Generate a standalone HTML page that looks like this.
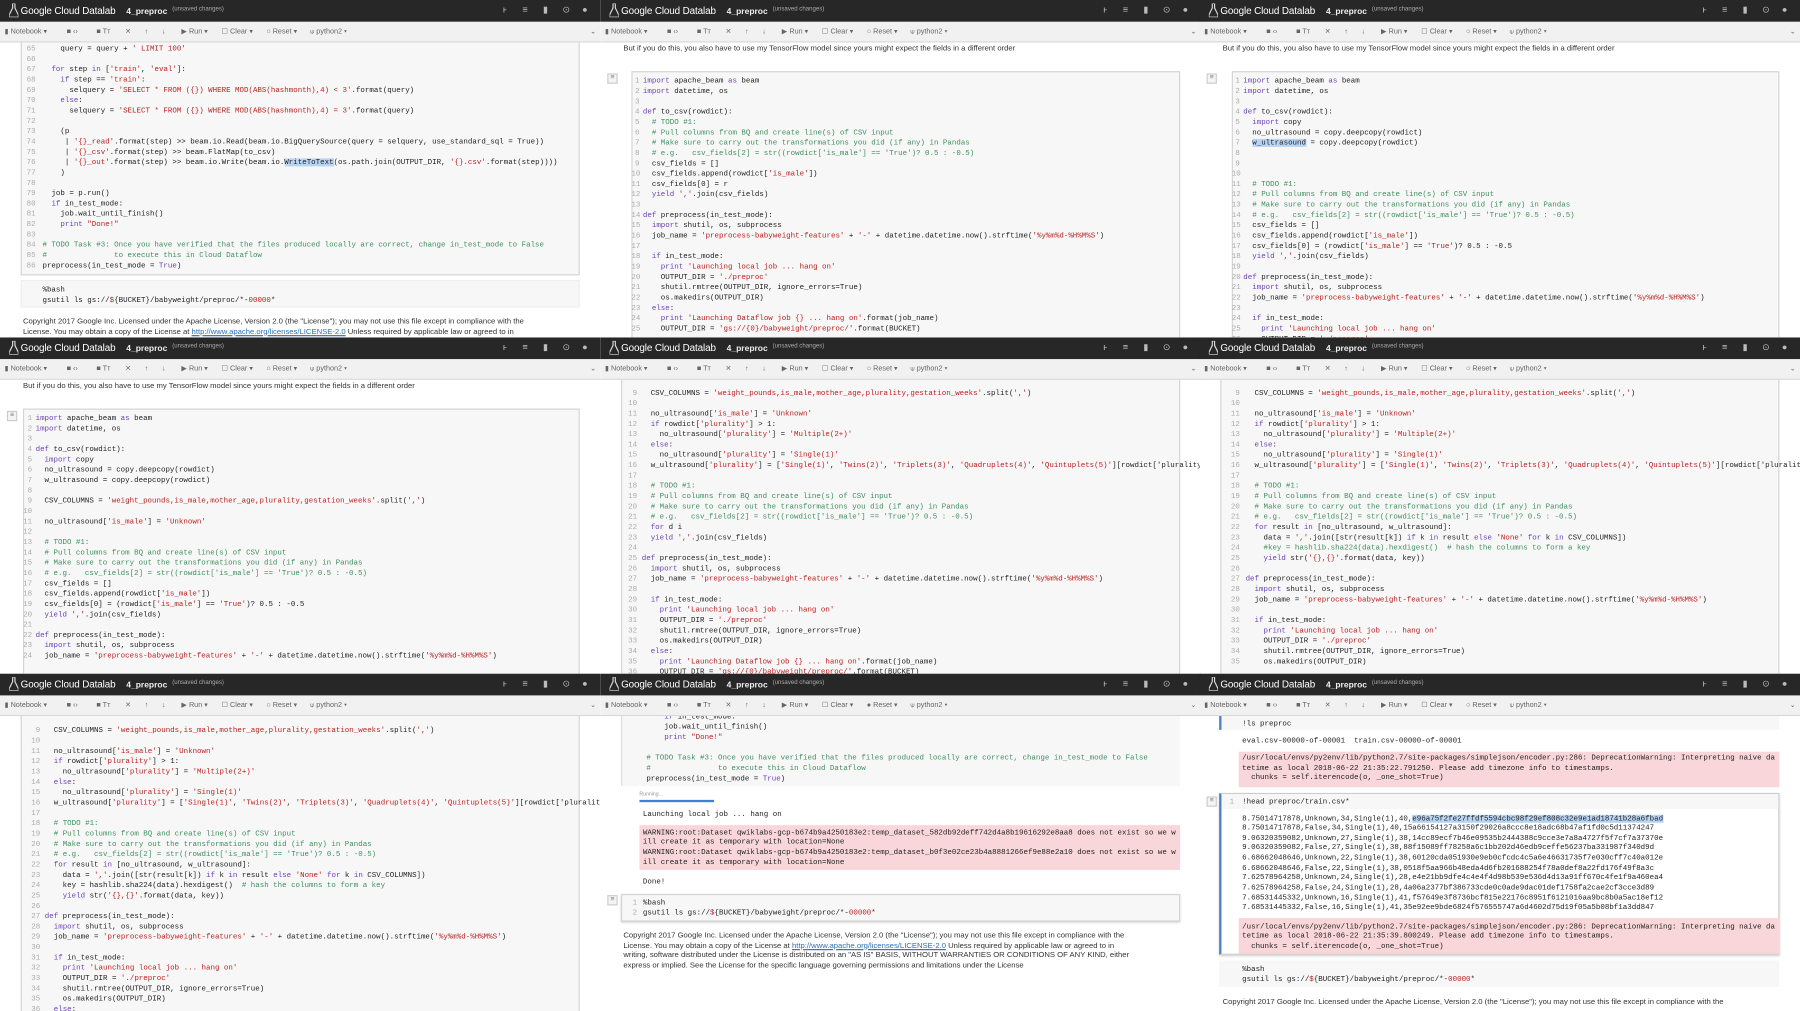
<!DOCTYPE html>
<html><head><meta charset="utf-8">
<style>
*{margin:0;padding:0;box-sizing:border-box}
html,body{width:1800px;height:1011px;overflow:hidden;background:#fff;font-family:"Liberation Sans",sans-serif}
#w{position:absolute;left:0;top:0;width:1568px;height:881px;transform:scale(1.148,1.1476);transform-origin:0 0}
.p{position:absolute;width:523px;height:294px;overflow:hidden;background:#fff;font-family:"Liberation Sans",sans-serif}
.h{position:absolute;left:0;top:0;width:523px;height:19px;background:#272727;color:#fff}
.h .lg{position:absolute;left:8px;top:3px}
.h .tt{position:absolute;left:18px;top:4px;font-size:8.6px;letter-spacing:-0.1px}
.h .nb{position:absolute;left:110px;top:5px;font-size:7.4px;font-weight:bold;color:#eee}
.h .us{position:absolute;left:150px;top:5px;font-size:5.3px;color:#aaa}
.h .ic{position:absolute;top:4px;font-size:8px;color:#bbb}
.t{position:absolute;left:0;top:19px;width:523px;height:18px;background:#f1f1f1;border-bottom:1px solid #d8d8d8;font-size:6.3px;color:#666}
.t span{position:absolute;top:5px;white-space:nowrap}
.cell{position:absolute;background:#f7f7f7;border:1px solid #d4d4d4}
.code{position:absolute;font-family:"Liberation Mono",monospace;font-size:6.5px;line-height:9px;color:#222;white-space:normal}
.code div{height:9px;white-space:pre}
.code b{display:inline-block;text-align:right;color:#aaa;font-weight:normal}
.cm{color:#3f8f5f}
.s{color:#ba2121}
.k{color:#6a3fb5}
.txt{position:absolute;font-size:6.7px;line-height:8.7px;color:#333;white-space:nowrap}
.txt a{color:#2a6fb5;text-decoration:underline}
.mn{position:absolute;width:9px;height:9px;border:1px solid #ccc;background:#f4f4f4;font-size:6px;line-height:7px;text-align:center;color:#777}
.pink{position:absolute;background:#f9d6d9}
.hx{position:absolute;width:523px;height:37px;overflow:hidden}
</style></head><body><div id="w">

<!-- Panel A -->
<div class="p" style="left:0;top:0">
<div class="cell" style="left:18px;top:30px;width:487px;height:210px"></div>
<div class="code" style="left:18px;top:37.5px">
<div><b style="width:13px;margin-right:6px">65</b>    query = query + <span class="s">' LIMIT 100'</span></div>
<div><b style="width:13px;margin-right:6px">66</b></div>
<div><b style="width:13px;margin-right:6px">67</b>  <span class="k">for</span> step <span class="k">in</span> [<span class="s">'train'</span>, <span class="s">'eval'</span>]:</div>
<div><b style="width:13px;margin-right:6px">68</b>    <span class="k">if</span> step == <span class="s">'train'</span>:</div>
<div><b style="width:13px;margin-right:6px">69</b>      selquery = <span class="s">'SELECT * FROM ({}) WHERE MOD(ABS(hashmonth),4) &lt; 3'</span>.format(query)</div>
<div><b style="width:13px;margin-right:6px">70</b>    <span class="k">else</span>:</div>
<div><b style="width:13px;margin-right:6px">71</b>      selquery = <span class="s">'SELECT * FROM ({}) WHERE MOD(ABS(hashmonth),4) = 3'</span>.format(query)</div>
<div><b style="width:13px;margin-right:6px">72</b></div>
<div><b style="width:13px;margin-right:6px">73</b>    (p</div>
<div><b style="width:13px;margin-right:6px">74</b>     | <span class="s">'{}_read'</span>.format(step) &gt;&gt; beam.io.Read(beam.io.BigQuerySource(query = selquery, use_standard_sql = True))</div>
<div><b style="width:13px;margin-right:6px">75</b>     | <span class="s">'{}_csv'</span>.format(step) &gt;&gt; beam.FlatMap(to_csv)</div>
<div><b style="width:13px;margin-right:6px">76</b>     | <span class="s">'{}_out'</span>.format(step) &gt;&gt; beam.io.Write(beam.io.<span style="background:#b9d4f3">WriteToText</span>(os.path.join(OUTPUT_DIR, <span class="s">'{}.csv'</span>.format(step))))</div>
<div><b style="width:13px;margin-right:6px">77</b>    )</div>
<div><b style="width:13px;margin-right:6px">78</b></div>
<div><b style="width:13px;margin-right:6px">79</b>  job = p.run()</div>
<div><b style="width:13px;margin-right:6px">80</b>  <span class="k">if</span> in_test_mode:</div>
<div><b style="width:13px;margin-right:6px">81</b>    job.wait_until_finish()</div>
<div><b style="width:13px;margin-right:6px">82</b>    <span class="k">print</span> <span class="s">"Done!"</span></div>
<div><b style="width:13px;margin-right:6px">83</b></div>
<div><b style="width:13px;margin-right:6px">84</b><span class="cm"># TODO Task #3: Once you have verified that the files produced locally are correct, change in_test_mode to False</span></div>
<div><b style="width:13px;margin-right:6px">85</b><span class="cm">#               to execute this in Cloud Dataflow</span></div>
<div><b style="width:13px;margin-right:6px">86</b>preprocess(in_test_mode = <span class="k">True</span>)</div>
</div>
<div class="cell" style="left:18px;top:244px;width:487px;height:24px;border-color:#eee"></div>
<div class="code" style="left:37px;top:247.5px"><div>%bash</div><div>gsutil ls gs://<span class="s">$</span>{BUCKET}/babyweight/preproc/*-<span class="s">00000</span>*</div></div>
<div class="txt" style="left:20px;top:277px">Copyright 2017 Google Inc. Licensed under the Apache License, Version 2.0 (the "License"); you may not use this file except in compliance with the<br>License. You may obtain a copy of the License at <a>http://www.apache.org/licenses/LICENSE-2.0</a> Unless required by applicable law or agreed to in</div>
</div>

<!-- Panel B -->
<div class="p" style="left:523px;top:0">
<div class="txt" style="left:20px;top:39px">But if you do this, you also have to use my TensorFlow model since yours might expect the fields in a different order</div>
<div class="mn" style="left:6px;top:64px">≡</div>
<div class="cell" style="left:27px;top:62px;width:478px;height:240px"></div>
<div class="code" style="left:27px;top:65.5px">
<div><b style="width:7px;margin-right:3px">1</b><span class="k">import</span> apache_beam <span class="k">as</span> beam</div>
<div><b style="width:7px;margin-right:3px">2</b><span class="k">import</span> datetime, os</div>
<div><b style="width:7px;margin-right:3px">3</b></div>
<div><b style="width:7px;margin-right:3px">4</b><span class="k">def</span> to_csv(rowdict):</div>
<div><b style="width:7px;margin-right:3px">5</b>  <span class="cm"># TODO #1:</span></div>
<div><b style="width:7px;margin-right:3px">6</b>  <span class="cm"># Pull columns from BQ and create line(s) of CSV input</span></div>
<div><b style="width:7px;margin-right:3px">7</b>  <span class="cm"># Make sure to carry out the transformations you did (if any) in Pandas</span></div>
<div><b style="width:7px;margin-right:3px">8</b>  <span class="cm"># e.g.   csv_fields[2] = str((rowdict['is_male'] == 'True')? 0.5 : -0.5)</span></div>
<div><b style="width:7px;margin-right:3px">9</b>  csv_fields = []</div>
<div><b style="width:7px;margin-right:3px">10</b>  csv_fields.append(rowdict[<span class="s">'is_male'</span>])</div>
<div><b style="width:7px;margin-right:3px">11</b>  csv_fields[0] = r</div>
<div><b style="width:7px;margin-right:3px">12</b>  <span class="k">yield</span> <span class="s">','</span>.join(csv_fields)</div>
<div><b style="width:7px;margin-right:3px">13</b></div>
<div><b style="width:7px;margin-right:3px">14</b><span class="k">def</span> preprocess(in_test_mode):</div>
<div><b style="width:7px;margin-right:3px">15</b>  <span class="k">import</span> shutil, os, subprocess</div>
<div><b style="width:7px;margin-right:3px">16</b>  job_name = <span class="s">'preprocess-babyweight-features'</span> + <span class="s">'-'</span> + datetime.datetime.now().strftime(<span class="s">'%y%m%d-%H%M%S'</span>)</div>
<div><b style="width:7px;margin-right:3px">17</b></div>
<div><b style="width:7px;margin-right:3px">18</b>  <span class="k">if</span> in_test_mode:</div>
<div><b style="width:7px;margin-right:3px">19</b>    <span class="k">print</span> <span class="s">'Launching local job ... hang on'</span></div>
<div><b style="width:7px;margin-right:3px">20</b>    OUTPUT_DIR = <span class="s">'./preproc'</span></div>
<div><b style="width:7px;margin-right:3px">21</b>    shutil.rmtree(OUTPUT_DIR, ignore_errors=True)</div>
<div><b style="width:7px;margin-right:3px">22</b>    os.makedirs(OUTPUT_DIR)</div>
<div><b style="width:7px;margin-right:3px">23</b>  <span class="k">else</span>:</div>
<div><b style="width:7px;margin-right:3px">24</b>    <span class="k">print</span> <span class="s">'Launching Dataflow job {} ... hang on'</span>.format(job_name)</div>
<div><b style="width:7px;margin-right:3px">25</b>    OUTPUT_DIR = <span class="s">'gs://{0}/babyweight/preproc/'</span>.format(BUCKET)</div>
</div>
</div>

<!-- Panel C -->
<div class="p" style="left:1045px;top:0">
<div class="txt" style="left:20px;top:39px">But if you do this, you also have to use my TensorFlow model since yours might expect the fields in a different order</div>
<div class="mn" style="left:6px;top:64px">≡</div>
<div class="cell" style="left:28px;top:62px;width:477px;height:240px"></div>
<div class="code" style="left:28px;top:65.5px">
<div><b style="width:7px;margin-right:3px">1</b><span class="k">import</span> apache_beam <span class="k">as</span> beam</div>
<div><b style="width:7px;margin-right:3px">2</b><span class="k">import</span> datetime, os</div>
<div><b style="width:7px;margin-right:3px">3</b></div>
<div><b style="width:7px;margin-right:3px">4</b><span class="k">def</span> to_csv(rowdict):</div>
<div><b style="width:7px;margin-right:3px">5</b>  <span class="k">import</span> copy</div>
<div><b style="width:7px;margin-right:3px">6</b>  no_ultrasound = copy.deepcopy(rowdict)</div>
<div><b style="width:7px;margin-right:3px">7</b>  <span style="background:#b9d4f3">w_ultrasound</span> = copy.deepcopy(rowdict)</div>
<div><b style="width:7px;margin-right:3px">8</b></div>
<div><b style="width:7px;margin-right:3px">9</b></div>
<div><b style="width:7px;margin-right:3px">10</b></div>
<div><b style="width:7px;margin-right:3px">11</b>  <span class="cm"># TODO #1:</span></div>
<div><b style="width:7px;margin-right:3px">12</b>  <span class="cm"># Pull columns from BQ and create line(s) of CSV input</span></div>
<div><b style="width:7px;margin-right:3px">13</b>  <span class="cm"># Make sure to carry out the transformations you did (if any) in Pandas</span></div>
<div><b style="width:7px;margin-right:3px">14</b>  <span class="cm"># e.g.   csv_fields[2] = str((rowdict['is_male'] == 'True')? 0.5 : -0.5)</span></div>
<div><b style="width:7px;margin-right:3px">15</b>  csv_fields = []</div>
<div><b style="width:7px;margin-right:3px">16</b>  csv_fields.append(rowdict[<span class="s">'is_male'</span>])</div>
<div><b style="width:7px;margin-right:3px">17</b>  csv_fields[0] = (rowdict[<span class="s">'is_male'</span>] == <span class="s">'True'</span>)? 0.5 : -0.5</div>
<div><b style="width:7px;margin-right:3px">18</b>  <span class="k">yield</span> <span class="s">','</span>.join(csv_fields)</div>
<div><b style="width:7px;margin-right:3px">19</b></div>
<div><b style="width:7px;margin-right:3px">20</b><span class="k">def</span> preprocess(in_test_mode):</div>
<div><b style="width:7px;margin-right:3px">21</b>  <span class="k">import</span> shutil, os, subprocess</div>
<div><b style="width:7px;margin-right:3px">22</b>  job_name = <span class="s">'preprocess-babyweight-features'</span> + <span class="s">'-'</span> + datetime.datetime.now().strftime(<span class="s">'%y%m%d-%H%M%S'</span>)</div>
<div><b style="width:7px;margin-right:3px">23</b></div>
<div><b style="width:7px;margin-right:3px">24</b>  <span class="k">if</span> in_test_mode:</div>
<div><b style="width:7px;margin-right:3px">25</b>    <span class="k">print</span> <span class="s">'Launching local job ... hang on'</span></div>
<div><b style="width:7px;margin-right:3px">26</b>    OUTPUT_DIR = <span class="s">'./preproc'</span></div>
<div><b style="width:7px;margin-right:3px">27</b>    shutil.rmtree(OUTPUT_DIR, ignore_errors=True)</div>
</div>
</div>

<!-- Panel D -->
<div class="p" style="left:0;top:294px">
<div class="txt" style="left:20px;top:39px">But if you do this, you also have to use my TensorFlow model since yours might expect the fields in a different order</div>
<div class="mn" style="left:6px;top:64px">≡</div>
<div class="cell" style="left:20px;top:62px;width:485px;height:240px"></div>
<div class="code" style="left:20px;top:65.5px">
<div><b style="width:8px;margin-right:3px">1</b><span class="k">import</span> apache_beam <span class="k">as</span> beam</div>
<div><b style="width:8px;margin-right:3px">2</b><span class="k">import</span> datetime, os</div>
<div><b style="width:8px;margin-right:3px">3</b></div>
<div><b style="width:8px;margin-right:3px">4</b><span class="k">def</span> to_csv(rowdict):</div>
<div><b style="width:8px;margin-right:3px">5</b>  <span class="k">import</span> copy</div>
<div><b style="width:8px;margin-right:3px">6</b>  no_ultrasound = copy.deepcopy(rowdict)</div>
<div><b style="width:8px;margin-right:3px">7</b>  w_ultrasound = copy.deepcopy(rowdict)</div>
<div><b style="width:8px;margin-right:3px">8</b></div>
<div><b style="width:8px;margin-right:3px">9</b>  CSV_COLUMNS = <span class="s">'weight_pounds,is_male,mother_age,plurality,gestation_weeks'</span>.split(<span class="s">','</span>)</div>
<div><b style="width:8px;margin-right:3px">10</b></div>
<div><b style="width:8px;margin-right:3px">11</b>  no_ultrasound[<span class="s">'is_male'</span>] = <span class="s">'Unknown'</span></div>
<div><b style="width:8px;margin-right:3px">12</b></div>
<div><b style="width:8px;margin-right:3px">13</b>  <span class="cm"># TODO #1:</span></div>
<div><b style="width:8px;margin-right:3px">14</b>  <span class="cm"># Pull columns from BQ and create line(s) of CSV input</span></div>
<div><b style="width:8px;margin-right:3px">15</b>  <span class="cm"># Make sure to carry out the transformations you did (if any) in Pandas</span></div>
<div><b style="width:8px;margin-right:3px">16</b>  <span class="cm"># e.g.   csv_fields[2] = str((rowdict['is_male'] == 'True')? 0.5 : -0.5)</span></div>
<div><b style="width:8px;margin-right:3px">17</b>  csv_fields = []</div>
<div><b style="width:8px;margin-right:3px">18</b>  csv_fields.append(rowdict[<span class="s">'is_male'</span>])</div>
<div><b style="width:8px;margin-right:3px">19</b>  csv_fields[0] = (rowdict[<span class="s">'is_male'</span>] == <span class="s">'True'</span>)? 0.5 : -0.5</div>
<div><b style="width:8px;margin-right:3px">20</b>  <span class="k">yield</span> <span class="s">','</span>.join(csv_fields)</div>
<div><b style="width:8px;margin-right:3px">21</b></div>
<div><b style="width:8px;margin-right:3px">22</b><span class="k">def</span> preprocess(in_test_mode):</div>
<div><b style="width:8px;margin-right:3px">23</b>  <span class="k">import</span> shutil, os, subprocess</div>
<div><b style="width:8px;margin-right:3px">24</b>  job_name = <span class="s">'preprocess-babyweight-features'</span> + <span class="s">'-'</span> + datetime.datetime.now().strftime(<span class="s">'%y%m%d-%H%M%S'</span>)</div>
</div>
</div>

<!-- Panel E -->
<div class="p" style="left:523px;top:294px">
<div class="cell" style="left:18px;top:30px;width:487px;height:272px"></div>
<div class="code" style="left:18px;top:43.5px">
<div><b style="width:14px;margin-right:4px">9</b>  CSV_COLUMNS = <span class="s">'weight_pounds,is_male,mother_age,plurality,gestation_weeks'</span>.split(<span class="s">','</span>)</div>
<div><b style="width:14px;margin-right:4px">10</b></div>
<div><b style="width:14px;margin-right:4px">11</b>  no_ultrasound[<span class="s">'is_male'</span>] = <span class="s">'Unknown'</span></div>
<div><b style="width:14px;margin-right:4px">12</b>  <span class="k">if</span> rowdict[<span class="s">'plurality'</span>] &gt; 1:</div>
<div><b style="width:14px;margin-right:4px">13</b>    no_ultrasound[<span class="s">'plurality'</span>] = <span class="s">'Multiple(2+)'</span></div>
<div><b style="width:14px;margin-right:4px">14</b>  <span class="k">else</span>:</div>
<div><b style="width:14px;margin-right:4px">15</b>    no_ultrasound[<span class="s">'plurality'</span>] = <span class="s">'Single(1)'</span></div>
<div><b style="width:14px;margin-right:4px">16</b>  w_ultrasound[<span class="s">'plurality'</span>] = [<span class="s">'Single(1)'</span>, <span class="s">'Twins(2)'</span>, <span class="s">'Triplets(3)'</span>, <span class="s">'Quadruplets(4)'</span>, <span class="s">'Quintuplets(5)'</span>][rowdict['plurality'] - 1]</div>
<div><b style="width:14px;margin-right:4px">17</b></div>
<div><b style="width:14px;margin-right:4px">18</b>  <span class="cm"># TODO #1:</span></div>
<div><b style="width:14px;margin-right:4px">19</b>  <span class="cm"># Pull columns from BQ and create line(s) of CSV input</span></div>
<div><b style="width:14px;margin-right:4px">20</b>  <span class="cm"># Make sure to carry out the transformations you did (if any) in Pandas</span></div>
<div><b style="width:14px;margin-right:4px">21</b>  <span class="cm"># e.g.   csv_fields[2] = str((rowdict['is_male'] == 'True')? 0.5 : -0.5)</span></div>
<div><b style="width:14px;margin-right:4px">22</b>  <span class="k">for</span> d i</div>
<div><b style="width:14px;margin-right:4px">23</b>  <span class="k">yield</span> <span class="s">','</span>.join(csv_fields)</div>
<div><b style="width:14px;margin-right:4px">24</b></div>
<div><b style="width:14px;margin-right:4px">25</b><span class="k">def</span> preprocess(in_test_mode):</div>
<div><b style="width:14px;margin-right:4px">26</b>  <span class="k">import</span> shutil, os, subprocess</div>
<div><b style="width:14px;margin-right:4px">27</b>  job_name = <span class="s">'preprocess-babyweight-features'</span> + <span class="s">'-'</span> + datetime.datetime.now().strftime(<span class="s">'%y%m%d-%H%M%S'</span>)</div>
<div><b style="width:14px;margin-right:4px">28</b></div>
<div><b style="width:14px;margin-right:4px">29</b>  <span class="k">if</span> in_test_mode:</div>
<div><b style="width:14px;margin-right:4px">30</b>    <span class="k">print</span> <span class="s">'Launching local job ... hang on'</span></div>
<div><b style="width:14px;margin-right:4px">31</b>    OUTPUT_DIR = <span class="s">'./preproc'</span></div>
<div><b style="width:14px;margin-right:4px">32</b>    shutil.rmtree(OUTPUT_DIR, ignore_errors=True)</div>
<div><b style="width:14px;margin-right:4px">33</b>    os.makedirs(OUTPUT_DIR)</div>
<div><b style="width:14px;margin-right:4px">34</b>  <span class="k">else</span>:</div>
<div><b style="width:14px;margin-right:4px">35</b>    <span class="k">print</span> <span class="s">'Launching Dataflow job {} ... hang on'</span>.format(job_name)</div>
<div><b style="width:14px;margin-right:4px">36</b>    OUTPUT_DIR = <span class="s">'gs://{0}/babyweight/preproc/'</span>.format(BUCKET)</div>
</div>
</div>

<!-- Panel F -->
<div class="p" style="left:1045px;top:294px">
<div class="cell" style="left:18px;top:30px;width:487px;height:272px"></div>
<div class="code" style="left:18px;top:43.5px">
<div><b style="width:17px;margin-right:5px">9</b>  CSV_COLUMNS = <span class="s">'weight_pounds,is_male,mother_age,plurality,gestation_weeks'</span>.split(<span class="s">','</span>)</div>
<div><b style="width:17px;margin-right:5px">10</b></div>
<div><b style="width:17px;margin-right:5px">11</b>  no_ultrasound[<span class="s">'is_male'</span>] = <span class="s">'Unknown'</span></div>
<div><b style="width:17px;margin-right:5px">12</b>  <span class="k">if</span> rowdict[<span class="s">'plurality'</span>] &gt; 1:</div>
<div><b style="width:17px;margin-right:5px">13</b>    no_ultrasound[<span class="s">'plurality'</span>] = <span class="s">'Multiple(2+)'</span></div>
<div><b style="width:17px;margin-right:5px">14</b>  <span class="k">else</span>:</div>
<div><b style="width:17px;margin-right:5px">15</b>    no_ultrasound[<span class="s">'plurality'</span>] = <span class="s">'Single(1)'</span></div>
<div><b style="width:17px;margin-right:5px">16</b>  w_ultrasound[<span class="s">'plurality'</span>] = [<span class="s">'Single(1)'</span>, <span class="s">'Twins(2)'</span>, <span class="s">'Triplets(3)'</span>, <span class="s">'Quadruplets(4)'</span>, <span class="s">'Quintuplets(5)'</span>][rowdict['plurality'] - 1]</div>
<div><b style="width:17px;margin-right:5px">17</b></div>
<div><b style="width:17px;margin-right:5px">18</b>  <span class="cm"># TODO #1:</span></div>
<div><b style="width:17px;margin-right:5px">19</b>  <span class="cm"># Pull columns from BQ and create line(s) of CSV input</span></div>
<div><b style="width:17px;margin-right:5px">20</b>  <span class="cm"># Make sure to carry out the transformations you did (if any) in Pandas</span></div>
<div><b style="width:17px;margin-right:5px">21</b>  <span class="cm"># e.g.   csv_fields[2] = str((rowdict['is_male'] == 'True')? 0.5 : -0.5)</span></div>
<div><b style="width:17px;margin-right:5px">22</b>  <span class="k">for</span> result <span class="k">in</span> [no_ultrasound, w_ultrasound]:</div>
<div><b style="width:17px;margin-right:5px">23</b>    data = <span class="s">','</span>.join([str(result[k]) <span class="k">if</span> k <span class="k">in</span> result <span class="k">else</span> <span class="s">'None'</span> <span class="k">for</span> k <span class="k">in</span> CSV_COLUMNS])</div>
<div><b style="width:17px;margin-right:5px">24</b>    <span class="cm">#key = hashlib.sha224(data).hexdigest()  # hash the columns to form a key</span></div>
<div><b style="width:17px;margin-right:5px">25</b>    <span class="k">yield</span> str(<span class="s">'{},{}'</span>.format(data, key))</div>
<div><b style="width:17px;margin-right:5px">26</b></div>
<div><b style="width:17px;margin-right:5px">27</b><span class="k">def</span> preprocess(in_test_mode):</div>
<div><b style="width:17px;margin-right:5px">28</b>  <span class="k">import</span> shutil, os, subprocess</div>
<div><b style="width:17px;margin-right:5px">29</b>  job_name = <span class="s">'preprocess-babyweight-features'</span> + <span class="s">'-'</span> + datetime.datetime.now().strftime(<span class="s">'%y%m%d-%H%M%S'</span>)</div>
<div><b style="width:17px;margin-right:5px">30</b></div>
<div><b style="width:17px;margin-right:5px">31</b>  <span class="k">if</span> in_test_mode:</div>
<div><b style="width:17px;margin-right:5px">32</b>    <span class="k">print</span> <span class="s">'Launching local job ... hang on'</span></div>
<div><b style="width:17px;margin-right:5px">33</b>    OUTPUT_DIR = <span class="s">'./preproc'</span></div>
<div><b style="width:17px;margin-right:5px">34</b>    shutil.rmtree(OUTPUT_DIR, ignore_errors=True)</div>
<div><b style="width:17px;margin-right:5px">35</b>    os.makedirs(OUTPUT_DIR)</div>
</div>
</div>

<!-- Panel G -->
<div class="p" style="left:0;top:587px">
<div class="cell" style="left:18px;top:30px;width:487px;height:272px"></div>
<div class="code" style="left:18px;top:44.5px">
<div><b style="width:17px;margin-right:4px">9</b>  CSV_COLUMNS = <span class="s">'weight_pounds,is_male,mother_age,plurality,gestation_weeks'</span>.split(<span class="s">','</span>)</div>
<div><b style="width:17px;margin-right:4px">10</b></div>
<div><b style="width:17px;margin-right:4px">11</b>  no_ultrasound[<span class="s">'is_male'</span>] = <span class="s">'Unknown'</span></div>
<div><b style="width:17px;margin-right:4px">12</b>  <span class="k">if</span> rowdict[<span class="s">'plurality'</span>] &gt; 1:</div>
<div><b style="width:17px;margin-right:4px">13</b>    no_ultrasound[<span class="s">'plurality'</span>] = <span class="s">'Multiple(2+)'</span></div>
<div><b style="width:17px;margin-right:4px">14</b>  <span class="k">else</span>:</div>
<div><b style="width:17px;margin-right:4px">15</b>    no_ultrasound[<span class="s">'plurality'</span>] = <span class="s">'Single(1)'</span></div>
<div><b style="width:17px;margin-right:4px">16</b>  w_ultrasound[<span class="s">'plurality'</span>] = [<span class="s">'Single(1)'</span>, <span class="s">'Twins(2)'</span>, <span class="s">'Triplets(3)'</span>, <span class="s">'Quadruplets(4)'</span>, <span class="s">'Quintuplets(5)'</span>][rowdict['plurality'] - 1]</div>
<div><b style="width:17px;margin-right:4px">17</b></div>
<div><b style="width:17px;margin-right:4px">18</b>  <span class="cm"># TODO #1:</span></div>
<div><b style="width:17px;margin-right:4px">19</b>  <span class="cm"># Pull columns from BQ and create line(s) of CSV input</span></div>
<div><b style="width:17px;margin-right:4px">20</b>  <span class="cm"># Make sure to carry out the transformations you did (if any) in Pandas</span></div>
<div><b style="width:17px;margin-right:4px">21</b>  <span class="cm"># e.g.   csv_fields[2] = str((rowdict['is_male'] == 'True')? 0.5 : -0.5)</span></div>
<div><b style="width:17px;margin-right:4px">22</b>  <span class="k">for</span> result <span class="k">in</span> [no_ultrasound, w_ultrasound]:</div>
<div><b style="width:17px;margin-right:4px">23</b>    data = <span class="s">','</span>.join([str(result[k]) <span class="k">if</span> k <span class="k">in</span> result <span class="k">else</span> <span class="s">'None'</span> <span class="k">for</span> k <span class="k">in</span> CSV_COLUMNS])</div>
<div><b style="width:17px;margin-right:4px">24</b>    key = hashlib.sha224(data).hexdigest()  <span class="cm"># hash the columns to form a key</span></div>
<div><b style="width:17px;margin-right:4px">25</b>    <span class="k">yield</span> str(<span class="s">'{},{}'</span>.format(data, key))</div>
<div><b style="width:17px;margin-right:4px">26</b></div>
<div><b style="width:17px;margin-right:4px">27</b><span class="k">def</span> preprocess(in_test_mode):</div>
<div><b style="width:17px;margin-right:4px">28</b>  <span class="k">import</span> shutil, os, subprocess</div>
<div><b style="width:17px;margin-right:4px">29</b>  job_name = <span class="s">'preprocess-babyweight-features'</span> + <span class="s">'-'</span> + datetime.datetime.now().strftime(<span class="s">'%y%m%d-%H%M%S'</span>)</div>
<div><b style="width:17px;margin-right:4px">30</b></div>
<div><b style="width:17px;margin-right:4px">31</b>  <span class="k">if</span> in_test_mode:</div>
<div><b style="width:17px;margin-right:4px">32</b>    <span class="k">print</span> <span class="s">'Launching local job ... hang on'</span></div>
<div><b style="width:17px;margin-right:4px">33</b>    OUTPUT_DIR = <span class="s">'./preproc'</span></div>
<div><b style="width:17px;margin-right:4px">34</b>    shutil.rmtree(OUTPUT_DIR, ignore_errors=True)</div>
<div><b style="width:17px;margin-right:4px">35</b>    os.makedirs(OUTPUT_DIR)</div>
<div><b style="width:17px;margin-right:4px">36</b>  <span class="k">else</span>:</div>
</div>
</div>

<!-- Panel H -->
<div class="p" style="left:523px;top:587px">
<div class="cell" style="left:18px;top:30px;width:487px;height:68px;border:none;border-left:1px solid #ddd"></div>
<div class="code" style="left:40px;top:33px">
<div>    <span class="k">if</span> in_test_mode:</div>
<div>    job.wait_until_finish()</div>
<div>    <span class="k">print</span> <span class="s">"Done!"</span></div>
<div></div>
<div><span class="cm"># TODO Task #3: Once you have verified that the files produced locally are correct, change in_test_mode to False</span></div>
<div><span class="cm">#               to execute this in Cloud Dataflow</span></div>
<div>preprocess(in_test_mode = <span class="k">True</span>)</div>
</div>
<div style="position:absolute;left:34px;top:102px;font-size:4.5px;color:#999">Running...</div>
<div style="position:absolute;left:34px;top:109.5px;width:65px;height:2px;background:#3f7fd6"></div>
<div class="code" style="left:37px;top:118px"><div>Launching local job ... hang on</div></div>
<div class="pink" style="left:34px;top:132px;width:471px;height:39px"></div>
<div class="code" style="left:37px;top:134.5px;line-height:8.7px">
<div style="height:8.7px">WARNING:root:Dataset qwiklabs-gcp-b674b9a4250183e2:temp_dataset_582db92deff742d4a8b19616292e8aa8 does not exist so we w</div>
<div style="height:8.7px">ill create it as temporary with location=None</div>
<div style="height:8.7px">WARNING:root:Dataset qwiklabs-gcp-b674b9a4250183e2:temp_dataset_b0f3e02ce23b4a8881266ef9e88e2a10 does not exist so we w</div>
<div style="height:8.7px">ill create it as temporary with location=None</div>
</div>
<div class="code" style="left:37px;top:176.5px"><div>Done!</div></div>
<div class="mn" style="left:6px;top:193px">≡</div>
<div class="cell" style="left:18px;top:192px;width:487px;height:24px;box-shadow:0 1px 2px #ccc"></div>
<div class="code" style="left:18px;top:195px">
<div><b style="width:14px;margin-right:5px">1</b>%bash</div>
<div><b style="width:14px;margin-right:5px">2</b>gsutil ls gs://<span class="s">$</span>{BUCKET}/babyweight/preproc/*-<span class="s">00000</span>*</div>
</div>
<div class="txt" style="left:20px;top:225px">Copyright 2017 Google Inc. Licensed under the Apache License, Version 2.0 (the "License"); you may not use this file except in compliance with the<br>License. You may obtain a copy of the License at <a>http://www.apache.org/licenses/LICENSE-2.0</a> Unless required by applicable law or agreed to in<br>writing, software distributed under the License is distributed on an "AS IS" BASIS, WITHOUT WARRANTIES OR CONDITIONS OF ANY KIND, either<br>express or implied. See the License for the specific language governing permissions and limitations under the License</div>
</div>

<!-- Panel I -->
<div class="p" style="left:1045px;top:587px">
<div class="cell" style="left:17px;top:30px;width:488px;height:19px;border:none;border-left:2px solid #4a7fc1;background:#f7f7f7"></div>
<div class="code" style="left:37px;top:38.5px"><div>!ls preproc</div></div>
<div class="code" style="left:37px;top:53.5px"><div>eval.csv-00000-of-00001  train.csv-00000-of-00001</div></div>
<div class="pink" style="left:34px;top:68px;width:471px;height:31px"></div>
<div class="code" style="left:37px;top:70px;line-height:8.7px">
<div style="height:8.7px">/usr/local/envs/py2env/lib/python2.7/site-packages/simplejson/encoder.py:286: DeprecationWarning: Interpreting naive da</div>
<div style="height:8.7px">tetime as local 2018-06-22 21:35:22.791250. Please add timezone info to timestamps.</div>
<div style="height:8.7px">  chunks = self.iterencode(o, _one_shot=True)</div>
</div>
<div class="mn" style="left:6px;top:107px">≡</div>
<div class="cell" style="left:17px;top:104px;width:488px;height:141px;background:#fff;border:1px solid #ccc;border-left:2px solid #4a7fc1;box-shadow:0 1px 2px #ccc"></div>
<div style="position:absolute;left:19px;top:105px;width:485px;height:13px;background:#f7f7f7"></div>
<div class="code" style="left:19px;top:106.5px"><div><b style="width:11px;margin-right:7px">1</b>!head preproc/train.csv*</div></div>
<div class="code" style="left:37px;top:122.5px;line-height:8.67px">
<div style="height:8.67px">8.75014717878,Unknown,34,Single(1),40,<span style="background:#b9d4f3">e96a75f2fe27ffdf5594cbc98f29ef808c32e9e1ad18741b28a6fbad</span></div>
<div style="height:8.67px">8.75014717878,False,34,Single(1),40,15a66154127a3150f29026a8ccc8e18adc68b47af1fd0c5d11374247</div>
<div style="height:8.67px">9.06320359082,Unknown,27,Single(1),38,14cc89ecf7b46e09535b2444388c9cce3e7a8a4727f5f7cf7a37370e</div>
<div style="height:8.67px">9.06320359082,False,27,Single(1),38,88f15089ff78258a6c1bb202d46edb9ceffe56237ba331987f340d9d</div>
<div style="height:8.67px">6.68662048646,Unknown,22,Single(1),38,60120cda051930e9eb0cfcdc4c5a6e46631735f7e030cff7c40a012e</div>
<div style="height:8.67px">6.68662048646,False,22,Single(1),38,0518f5aa966b48eda4d6fb201688254f78a0def8a22fd176f49f8a3c</div>
<div style="height:8.67px">7.62578964258,Unknown,24,Single(1),28,e4e21bb9dfe4c4e4f4d98b539e536d4d13a91ff670c4fe1f9a460ea4</div>
<div style="height:8.67px">7.62578964258,False,24,Single(1),28,4a06a2377bf386733cde0c0ade9dac01def1758fa2cae2cf3cce3d89</div>
<div style="height:8.67px">7.68531445332,Unknown,16,Single(1),41,f57649e3f8736bcf815e22176c8951f6121016aa9bc8b0a5ac18ef12</div>
<div style="height:8.67px">7.68531445332,False,16,Single(1),41,35e92ee9bde6824f576555747a6d4602d75d19f05a5b08bf1a3dd847</div>
</div>
<div class="pink" style="left:34px;top:213px;width:471px;height:31px"></div>
<div class="code" style="left:37px;top:216.5px;line-height:8.7px">
<div style="height:8.7px">/usr/local/envs/py2env/lib/python2.7/site-packages/simplejson/encoder.py:286: DeprecationWarning: Interpreting naive da</div>
<div style="height:8.7px">tetime as local 2018-06-22 21:35:39.800249. Please add timezone info to timestamps.</div>
<div style="height:8.7px">  chunks = self.iterencode(o, _one_shot=True)</div>
</div>
<div class="cell" style="left:17px;top:250px;width:488px;height:23px;border:none;background:#f7f7f7"></div>
<div class="code" style="left:37px;top:252.5px"><div>%bash</div><div>gsutil ls gs://<span class="s">$</span>{BUCKET}/babyweight/preproc/*-<span class="s">00000</span>*</div></div>
<div class="txt" style="left:20px;top:283px">Copyright 2017 Google Inc. Licensed under the Apache License, Version 2.0 (the "License"); you may not use this file except in compliance with the</div>
</div>

<!-- headers & toolbars -->
<div class="hx" style="left:0;top:0"><div class="h"><svg class="lg" width="8" height="12" viewBox="0 0 8 12"><path d="M3 0h2v4l3 6v2H0v-2l3-6z" fill="none" stroke="#ddd" stroke-width="1"/></svg><span class="tt">Google Cloud Datalab</span><span class="nb">4_preproc</span><span class="us">(unsaved changes)</span><span class="ic" style="left:438px">ⱶ</span><span class="ic" style="left:455px">≡</span><span class="ic" style="left:473px">▮</span><span class="ic" style="left:490px">⊙</span><span class="ic" style="left:507px">●</span></div><div class="t"><span style="left:4px">▮ Notebook ▾</span><span style="left:58px">■ ‹›</span><span style="left:84px">■ Tт</span><span style="left:109px">✕</span><span style="left:126px">↑</span><span style="left:141px">↓</span><span style="left:158px">▶ Run ▾</span><span style="left:193px">☐ Clear ▾</span><span style="left:232px">○ Reset ▾</span><span style="left:270px">⍦ python2 ▾</span><span style="left:514px">⌄</span></div></div>
<div class="hx" style="left:523px;top:0"><div class="h"><svg class="lg" width="8" height="12" viewBox="0 0 8 12"><path d="M3 0h2v4l3 6v2H0v-2l3-6z" fill="none" stroke="#ddd" stroke-width="1"/></svg><span class="tt">Google Cloud Datalab</span><span class="nb">4_preproc</span><span class="us">(unsaved changes)</span><span class="ic" style="left:438px">ⱶ</span><span class="ic" style="left:455px">≡</span><span class="ic" style="left:473px">▮</span><span class="ic" style="left:490px">⊙</span><span class="ic" style="left:507px">●</span></div><div class="t"><span style="left:4px">▮ Notebook ▾</span><span style="left:58px">■ ‹›</span><span style="left:84px">■ Tт</span><span style="left:109px">✕</span><span style="left:126px">↑</span><span style="left:141px">↓</span><span style="left:158px">▶ Run ▾</span><span style="left:193px">☐ Clear ▾</span><span style="left:232px">○ Reset ▾</span><span style="left:270px">⍦ python2 ▾</span><span style="left:514px">⌄</span></div></div>
<div class="hx" style="left:1045px;top:0"><div class="h"><svg class="lg" width="8" height="12" viewBox="0 0 8 12"><path d="M3 0h2v4l3 6v2H0v-2l3-6z" fill="none" stroke="#ddd" stroke-width="1"/></svg><span class="tt">Google Cloud Datalab</span><span class="nb">4_preproc</span><span class="us">(unsaved changes)</span><span class="ic" style="left:438px">ⱶ</span><span class="ic" style="left:455px">≡</span><span class="ic" style="left:473px">▮</span><span class="ic" style="left:490px">⊙</span><span class="ic" style="left:507px">●</span></div><div class="t"><span style="left:4px">▮ Notebook ▾</span><span style="left:58px">■ ‹›</span><span style="left:84px">■ Tт</span><span style="left:109px">✕</span><span style="left:126px">↑</span><span style="left:141px">↓</span><span style="left:158px">▶ Run ▾</span><span style="left:193px">☐ Clear ▾</span><span style="left:232px">○ Reset ▾</span><span style="left:270px">⍦ python2 ▾</span><span style="left:514px">⌄</span></div></div>
<div class="hx" style="left:0;top:294px"><div class="h"><svg class="lg" width="8" height="12" viewBox="0 0 8 12"><path d="M3 0h2v4l3 6v2H0v-2l3-6z" fill="none" stroke="#ddd" stroke-width="1"/></svg><span class="tt">Google Cloud Datalab</span><span class="nb">4_preproc</span><span class="us">(unsaved changes)</span><span class="ic" style="left:438px">ⱶ</span><span class="ic" style="left:455px">≡</span><span class="ic" style="left:473px">▮</span><span class="ic" style="left:490px">⊙</span><span class="ic" style="left:507px">●</span></div><div class="t"><span style="left:4px">▮ Notebook ▾</span><span style="left:58px">■ ‹›</span><span style="left:84px">■ Tт</span><span style="left:109px">✕</span><span style="left:126px">↑</span><span style="left:141px">↓</span><span style="left:158px">▶ Run ▾</span><span style="left:193px">☐ Clear ▾</span><span style="left:232px">○ Reset ▾</span><span style="left:270px">⍦ python2 ▾</span><span style="left:514px">⌄</span></div></div>
<div class="hx" style="left:523px;top:294px"><div class="h"><svg class="lg" width="8" height="12" viewBox="0 0 8 12"><path d="M3 0h2v4l3 6v2H0v-2l3-6z" fill="none" stroke="#ddd" stroke-width="1"/></svg><span class="tt">Google Cloud Datalab</span><span class="nb">4_preproc</span><span class="us">(unsaved changes)</span><span class="ic" style="left:438px">ⱶ</span><span class="ic" style="left:455px">≡</span><span class="ic" style="left:473px">▮</span><span class="ic" style="left:490px">⊙</span><span class="ic" style="left:507px">●</span></div><div class="t"><span style="left:4px">▮ Notebook ▾</span><span style="left:58px">■ ‹›</span><span style="left:84px">■ Tт</span><span style="left:109px">✕</span><span style="left:126px">↑</span><span style="left:141px">↓</span><span style="left:158px">▶ Run ▾</span><span style="left:193px">☐ Clear ▾</span><span style="left:232px">○ Reset ▾</span><span style="left:270px">⍦ python2 ▾</span><span style="left:514px">⌄</span></div></div>
<div class="hx" style="left:1045px;top:294px"><div class="h"><svg class="lg" width="8" height="12" viewBox="0 0 8 12"><path d="M3 0h2v4l3 6v2H0v-2l3-6z" fill="none" stroke="#ddd" stroke-width="1"/></svg><span class="tt">Google Cloud Datalab</span><span class="nb">4_preproc</span><span class="us">(unsaved changes)</span><span class="ic" style="left:438px">ⱶ</span><span class="ic" style="left:455px">≡</span><span class="ic" style="left:473px">▮</span><span class="ic" style="left:490px">⊙</span><span class="ic" style="left:507px">●</span></div><div class="t"><span style="left:4px">▮ Notebook ▾</span><span style="left:58px">■ ‹›</span><span style="left:84px">■ Tт</span><span style="left:109px">✕</span><span style="left:126px">↑</span><span style="left:141px">↓</span><span style="left:158px">▶ Run ▾</span><span style="left:193px">☐ Clear ▾</span><span style="left:232px">○ Reset ▾</span><span style="left:270px">⍦ python2 ▾</span><span style="left:514px">⌄</span></div></div>
<div class="hx" style="left:0;top:587px"><div class="h"><svg class="lg" width="8" height="12" viewBox="0 0 8 12"><path d="M3 0h2v4l3 6v2H0v-2l3-6z" fill="none" stroke="#ddd" stroke-width="1"/></svg><span class="tt">Google Cloud Datalab</span><span class="nb">4_preproc</span><span class="us">(unsaved changes)</span><span class="ic" style="left:438px">ⱶ</span><span class="ic" style="left:455px">≡</span><span class="ic" style="left:473px">▮</span><span class="ic" style="left:490px">⊙</span><span class="ic" style="left:507px">●</span></div><div class="t"><span style="left:4px">▮ Notebook ▾</span><span style="left:58px">■ ‹›</span><span style="left:84px">■ Tт</span><span style="left:109px">✕</span><span style="left:126px">↑</span><span style="left:141px">↓</span><span style="left:158px">▶ Run ▾</span><span style="left:193px">☐ Clear ▾</span><span style="left:232px">○ Reset ▾</span><span style="left:270px">⍦ python2 ▾</span><span style="left:514px">⌄</span></div></div>
<div class="hx" style="left:523px;top:587px"><div class="h"><svg class="lg" width="8" height="12" viewBox="0 0 8 12"><path d="M3 0h2v4l3 6v2H0v-2l3-6z" fill="none" stroke="#ddd" stroke-width="1"/></svg><span class="tt">Google Cloud Datalab</span><span class="nb">4_preproc</span><span class="us">(unsaved changes)</span><span class="ic" style="left:438px">ⱶ</span><span class="ic" style="left:455px">≡</span><span class="ic" style="left:473px">▮</span><span class="ic" style="left:490px">⊙</span><span class="ic" style="left:507px">●</span></div><div class="t"><span style="left:4px">▮ Notebook ▾</span><span style="left:58px">■ ‹›</span><span style="left:84px">■ Tт</span><span style="left:109px">✕</span><span style="left:126px">↑</span><span style="left:141px">↓</span><span style="left:158px">▶ Run ▾</span><span style="left:193px">☐ Clear ▾</span><span style="left:232px">● Reset ▾</span><span style="left:270px">⍦ python2 ▾</span><span style="left:514px">⌄</span></div></div>
<div class="hx" style="left:1045px;top:587px"><div class="h"><svg class="lg" width="8" height="12" viewBox="0 0 8 12"><path d="M3 0h2v4l3 6v2H0v-2l3-6z" fill="none" stroke="#ddd" stroke-width="1"/></svg><span class="tt">Google Cloud Datalab</span><span class="nb">4_preproc</span><span class="us">(unsaved changes)</span><span class="ic" style="left:438px">ⱶ</span><span class="ic" style="left:455px">≡</span><span class="ic" style="left:473px">▮</span><span class="ic" style="left:490px">⊙</span><span class="ic" style="left:507px">●</span></div><div class="t"><span style="left:4px">▮ Notebook ▾</span><span style="left:58px">■ ‹›</span><span style="left:84px">■ Tт</span><span style="left:109px">✕</span><span style="left:126px">↑</span><span style="left:141px">↓</span><span style="left:158px">▶ Run ▾</span><span style="left:193px">☐ Clear ▾</span><span style="left:232px">○ Reset ▾</span><span style="left:270px">⍦ python2 ▾</span><span style="left:514px">⌄</span></div></div>

</div></body></html>
